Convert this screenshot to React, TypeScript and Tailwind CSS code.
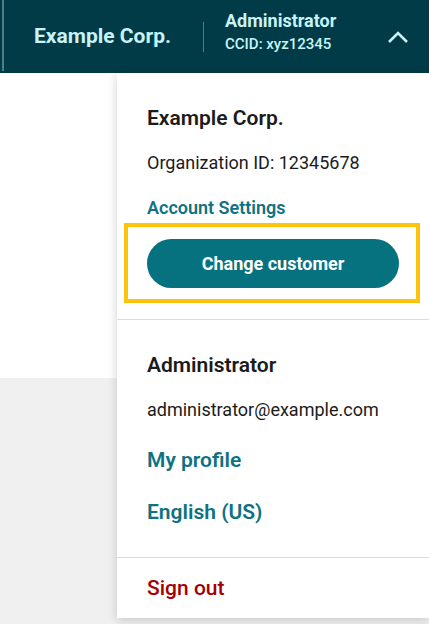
import type { ReactNode } from 'react';

const font = { fontFamily: 'Roboto, "Noto Sans", Arial, sans-serif' };

export default function App() {
  return (
    <div className="relative h-[624px] w-[429px] overflow-hidden bg-[#f0f0f0]" style={font}>
      {/* Top bar */}
      <header className="flex h-[73px] items-center bg-[#003b47] text-[#c9f3f6]">
        <div className="ml-[2px] h-[71px] self-start border-l-2 border-[#4d7d87]" />
        <div className="ml-[30px] w-[150px] whitespace-nowrap text-[21px] font-bold">Example Corp.</div>
        <div className="ml-[19px] h-[30px] w-px bg-[#4f7f89]" />
        <div className="mb-[10px] ml-[21px] flex flex-col whitespace-nowrap">
          <span className="text-[18px] font-bold leading-[22px]">Administrator</span>
          <span className="mt-[2px] text-[15px] font-medium leading-[20px]">CCID: xyz12345</span>
        </div>
        <svg className="ml-auto mr-[20px]" width="22" height="14" viewBox="0 0 22 14">
          <polyline points="2,12 11,3 20,12" fill="none" stroke="currentColor" strokeWidth="2.6" />
        </svg>
      </header>
      <div className="h-[305px] bg-white" />

      {/* Account dropdown */}
      <div className="absolute left-[117px] right-0 top-[73px] h-[545px] bg-white shadow-[0_2px_10px_rgba(0,0,0,0.18)]">
        <section className="flex flex-col pl-[30px] pt-[33px] pb-[31px]">
          <Line className="text-[21px] font-semibold text-[#1b1b1b]">Example Corp.</Line>
          <Line className="mt-[21px] text-[18px] text-[#1b1b1b]">Organization ID: 12345678</Line>
          <Line className="mt-[21px] text-[18px] font-semibold text-[#0e7282]">Account Settings</Line>
          <div className="relative mt-[19px]">
            <button
              type="button"
              className="h-[49px] w-[252px] rounded-full bg-[#06717f] text-[18px] font-bold text-white"
            >
              Change customer
            </button>
            {/* highlight frame */}
            <div className="pointer-events-none absolute -left-[23px] -top-[16px] h-[80px] w-[296px] border-[4px] border-[#fcc40c]" />
          </div>
        </section>
        <div className="h-px bg-[#dcdcdc]" />
        <section className="flex flex-col pl-[30px] pt-[33px] pb-[33px]">
          <Line className="text-[21px] font-semibold text-[#1b1b1b]">Administrator</Line>
          <Line className="mt-[21px] text-[18px] text-[#1b1b1b]">administrator@example.com</Line>
          <Line className="mt-[26px] text-[21px] font-semibold text-[#0e7282]">My profile</Line>
          <Line className="mt-[28px] text-[21px] font-semibold text-[#0e7282]">English (US)</Line>
        </section>
        <div className="h-px bg-[#dcdcdc]" />
        <section className="pl-[30px] pt-[18px]">
          <Line className="text-[21px] font-medium text-[#a50000]">Sign out</Line>
        </section>
      </div>
    </div>
  );
}

function Line({ className, children }: { className: string; children: ReactNode }) {
  return <div className={`leading-[24px] ${className}`}>{children}</div>;
}
